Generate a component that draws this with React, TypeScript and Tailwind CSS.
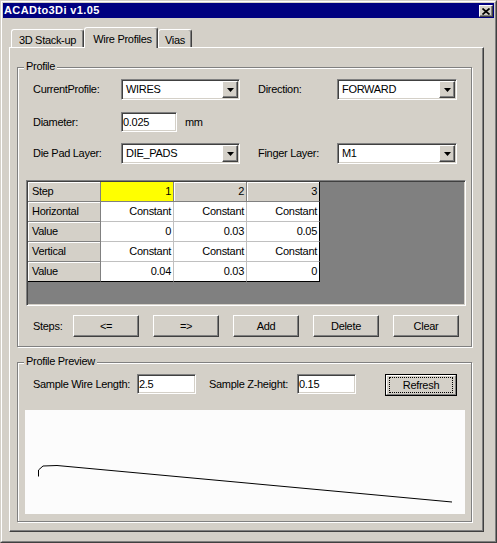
import React from "react";

// Win2k style bevels
const raised =
  "border border-t-white border-l-white border-r-[#404040] border-b-[#404040] shadow-[inset_-1px_-1px_0_#808080]";
const sunken =
  "border border-t-[#808080] border-l-[#808080] border-r-white border-b-white shadow-[inset_1px_1px_0_#404040,inset_-1px_-1px_0_#d4d0c8] p-px";

const gridRows = [
  ["Step", "1", "2", "3"],
  ["Horizontal", "Constant", "Constant", "Constant"],
  ["Value", "0", "0.03", "0.05"],
  ["Vertical", "Constant", "Constant", "Constant"],
  ["Value", "0.04", "0.03", "0"],
];

function Tab({ label, w, active }: { label: string; w: string; active?: boolean }) {
  return (
    <div
      className={`${w} ${
        active ? "h-[21px] -mb-px pt-[4px] pl-[3px]" : "h-[18px] pt-[3px]"
      } bg-[#d4d0c8] border-t border-l border-r border-t-white border-l-white border-r-[#404040] rounded-t-[3px] shadow-[inset_-1px_0_0_#808080] flex justify-center whitespace-nowrap`}
    >
      {label}
    </div>
  );
}

function Group({
  label,
  className,
  children,
}: {
  label: string;
  className: string;
  children: React.ReactNode;
}) {
  return (
    <div
      className={`relative border border-[#808080] shadow-[inset_1px_1px_0_#fff,1px_1px_0_#fff] ${className}`}
    >
      <span className="absolute -top-[9px] left-[6px] px-[2px] bg-[#d4d0c8] whitespace-nowrap">
        {label}
      </span>
      {children}
    </div>
  );
}

function Combo({ value, w }: { value: string; w: string }) {
  return (
    <div className={`${w} h-[21px] bg-white flex ${sunken}`}>
      <div className="flex-1 pl-[3px] flex items-center">{value}</div>
      <div className={`w-[16px] bg-[#d4d0c8] flex items-center justify-center ${raised}`}>
        <svg width="7" height="4" viewBox="0 0 7 4">
          <polygon points="0,0 7,0 3.5,4" fill="#000" />
        </svg>
      </div>
    </div>
  );
}

function TextBox({ value, w }: { value: string; w: string }) {
  return (
    <div className={`${w} h-[20px] bg-white flex items-center pl-[1px] ${sunken}`}>{value}</div>
  );
}

function Button({ label }: { label: string }) {
  return (
    <div className={`w-[66px] h-[22px] bg-[#d4d0c8] flex items-center justify-center ${raised}`}>
      {label}
    </div>
  );
}

export default function App() {
  return (
    <div className="w-[497px] h-[543px] bg-[#d4d0c8] border border-t-[#d4d0c8] border-l-[#d4d0c8] border-r-[#404040] border-b-[#404040] text-black text-[11px] leading-[15px] tracking-[-0.3px] [font-family:'Liberation_Sans',Arial,sans-serif]">
      <div className="h-full border border-t-white border-l-white border-r-[#808080] border-b-[#808080] p-px flex flex-col">
        {/* Title bar */}
        <div className="h-[15px] shrink-0 bg-[#000080] flex items-start justify-between">
          <span className="pl-[1px] pt-[1px] text-white font-bold text-[11px] leading-[13px] tracking-[0.4px]">
            ACADto3Di v1.05
          </span>
          <div
            className={`mt-[2px] mr-[1px] w-[14px] h-[12px] bg-[#d4d0c8] flex items-center justify-center ${raised}`}
          >
            <svg width="8" height="7" viewBox="0 0 8 7">
              <path d="M0.5 0.5 L7.5 6.5 M7.5 0.5 L0.5 6.5" stroke="#000" strokeWidth="1.7" />
            </svg>
          </div>
        </div>

        {/* Tabs */}
        <div className="mt-[9px] pl-[8px] h-[20px] shrink-0 flex items-end relative z-10">
          <Tab label="3D Stack-up" w="w-[73px]" />
          <Tab label="Wire Profiles" w="w-[74px]" active />
          <Tab label="Vias" w="w-[34px]" />
        </div>

        {/* Tab page */}
        <div className={`ml-[6px] w-[475px] h-[485px] shrink-0 flex flex-col ${raised}`}>
          <Group label="Profile" className="ml-[7px] mt-[19px] w-[455px] h-[280px] shrink-0">
            <div className="pt-[11px] flex flex-col">
              <div className="pl-[15px] h-[21px] flex items-center">
                <span className="w-[88px] shrink-0">CurrentProfile:</span>
                <Combo value="WIRES" w="w-[119px]" />
                <span className="ml-[18px] w-[79px] shrink-0">Direction:</span>
                <Combo value="FORWARD" w="w-[120px]" />
              </div>
              <div className="mt-[12px] pl-[15px] h-[20px] flex items-center">
                <span className="w-[88px] shrink-0">Diameter:</span>
                <TextBox value="0.025" w="w-[56px]" />
                <span className="ml-[8px]">mm</span>
              </div>
              <div className="mt-[11px] pl-[15px] h-[21px] flex items-center">
                <span className="w-[88px] shrink-0">Die Pad Layer:</span>
                <Combo value="DIE_PADS" w="w-[119px]" />
                <span className="ml-[18px] w-[79px] shrink-0">Finger Layer:</span>
                <Combo value="M1" w="w-[120px]" />
              </div>

              {/* Step grid */}
              <div className={`mt-[16px] ml-[8px] w-[440px] h-[126px] bg-[#808080] ${sunken}`}>
                {gridRows.map((row, r) => (
                  <div key={r} className="flex">
                    {row.map((cell, c) => {
                      const fixed = c === 0 || (r === 0 && c > 1);
                      const yellow = r === 0 && c === 1;
                      const look = fixed
                        ? "bg-[#d4d0c8] border-[#808080] shadow-[inset_1px_1px_0_#fff]"
                        : yellow
                        ? "bg-[#ffff00] border-[#808080]"
                        : "bg-white border-[#c0c0c0]";
                      return (
                        <div
                          key={c}
                          className={`w-[73px] h-[20px] border-r border-b flex items-center ${
                            c === 0 ? "justify-start pl-[4px]" : "justify-end pr-[2px]"
                          } ${look} ${c === 3 ? "border-r-black" : ""} ${
                            r === 4 ? "border-b-black" : ""
                          }`}
                        >
                          {cell}
                        </div>
                      );
                    })}
                  </div>
                ))}
              </div>

              <div className="mt-[9px] pl-[15px] h-[22px] flex items-center">
                <span className="w-[40px] shrink-0">Steps:</span>
                <div className="flex gap-[14px]">
                  <Button label="<=" />
                  <Button label="=>" />
                  <Button label="Add" />
                  <Button label="Delete" />
                  <Button label="Clear" />
                </div>
              </div>
            </div>
          </Group>

          <Group label="Profile Preview" className="ml-[7px] mt-[15px] w-[455px] h-[160px] shrink-0">
            <div className="pt-[11px] flex flex-col">
              <div className="pl-[15px] flex items-start">
                <span className="w-[104px] h-[20px] shrink-0 flex items-center whitespace-nowrap">
                  Sample Wire Length:
                </span>
                <TextBox value="2.5" w="w-[59px]" />
                <span className="ml-[13px] w-[88px] h-[20px] shrink-0 flex items-center whitespace-nowrap">
                  Sample Z-height:
                </span>
                <TextBox value="0.15" w="w-[59px]" />
                <div className="ml-[29px] w-[72px] h-[22px] border border-black">
                  <div className="h-full bg-[#d4d0c8] border border-t-white border-l-white border-r-[#808080] border-b-[#808080] px-[2px] py-[1px]">
                    <div className="h-full border border-dotted border-black flex items-center justify-center">
                      Refresh
                    </div>
                  </div>
                </div>
              </div>
              <div className="mt-[14px] ml-[7px] w-[440px] h-[104px] bg-[#fcfcfc]">
                <svg width="440" height="104" viewBox="0 0 440 104">
                  <polyline
                    points="13.5,66.5 13.5,60 18,56 32,55.5 427,92"
                    fill="none"
                    stroke="#000"
                    strokeWidth="1"
                  />
                </svg>
              </div>
            </div>
          </Group>
        </div>
      </div>
    </div>
  );
}
